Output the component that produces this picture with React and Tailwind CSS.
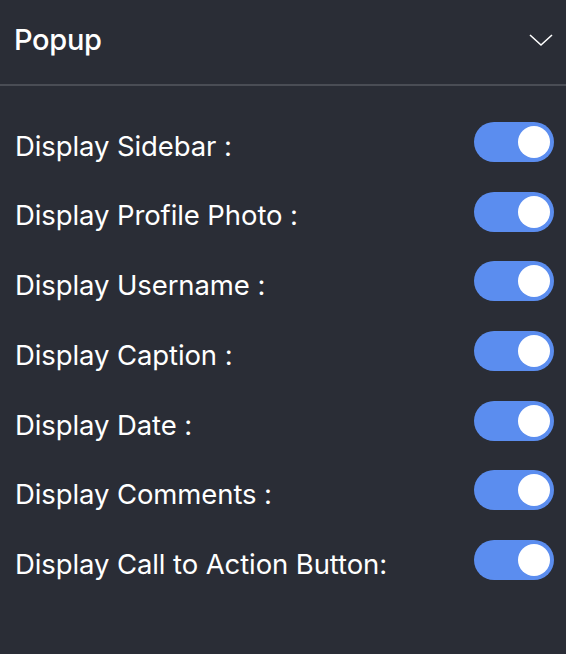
import { useState } from "react";

const options = [
  "Display Sidebar :",
  "Display Profile Photo :",
  "Display Username :",
  "Display Caption :",
  "Display Date :",
  "Display Comments :",
  "Display Call to Action Button:",
];

function Toggle({ on, onChange }) {
  return (
    <button
      type="button"
      onClick={onChange}
      className={`flex h-[40px] w-[80px] shrink-0 items-center rounded-full px-[4px] ${
        on ? "justify-end bg-[#5b8def]" : "justify-start bg-[#4b4e57]"
      }`}
    >
      <span className="block h-[32px] w-[32px] rounded-full bg-white" />
    </button>
  );
}

export default function App() {
  const [values, setValues] = useState(options.map(() => true));

  return (
    <div
      className="h-[654px] w-[566px] bg-[#2a2d36] text-white"
      style={{ fontFamily: "Inter, 'Liberation Sans', sans-serif" }}
    >
      <div className="flex h-[86px] items-center justify-between border-b-2 border-[#4a4d55] pl-[14px] pr-[12px] pb-[4px]">
        <h2 className="text-[29px] font-medium tracking-[-0.3px]">Popup</h2>
        <svg width="26" height="16" viewBox="0 0 26 16" fill="none">
          <path d="M2 3l11 10L24 3" stroke="white" strokeWidth="1.6" />
        </svg>
      </div>

      <div className="flex flex-col gap-[29.7px] pt-[36px] pl-[15px] pr-[12px]">
        {options.map((label, index) => (
          <div key={label} className="flex h-[40px] items-center justify-between">
            <span className="whitespace-nowrap pt-[9px] text-[27.5px] leading-none tracking-[-0.1px]">
              {label}
            </span>
            <Toggle
              on={values[index]}
              onChange={() =>
                setValues((prev) => prev.map((v, i) => (i === index ? !v : v)))
              }
            />
          </div>
        ))}
      </div>
    </div>
  );
}
